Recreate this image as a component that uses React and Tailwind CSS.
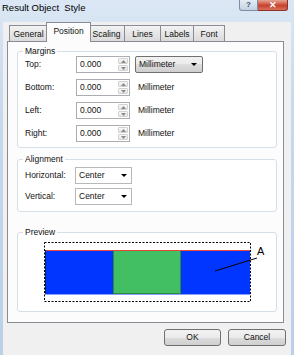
import React from "react";

const Tri = ({ up, w = 5, h = 3 }) => (
  <svg width={w} height={h} viewBox={`0 0 ${w} ${h}`}>
    <path d={up ? `M0 ${h} L${w / 2} 0 L${w} ${h} Z` : `M0 0 L${w} 0 L${w / 2} ${h} Z`} fill="currentColor" />
  </svg>
);

const SpinBox = ({ value }) => (
  <div className="flex h-[17px] w-[54px] border border-[#abadb3] bg-white">
    <div className="flex-1 pl-[3px] leading-[15px]">{value}</div>
    <div className="flex w-[12px] flex-col gap-px p-px">
      <div className="flex flex-1 items-center justify-center rounded-[1px] border border-[#d2d2d2] bg-[linear-gradient(#f8f8f8,#e6e6e6)] text-[#8a8a8a]">
        <Tri up />
      </div>
      <div className="flex flex-1 items-center justify-center rounded-[1px] border border-[#d2d2d2] bg-[linear-gradient(#f8f8f8,#e6e6e6)] text-[#8a8a8a]">
        <Tri />
      </div>
    </div>
  </div>
);

const Select = ({ value }) => (
  <div className="flex h-[17px] w-[57px] items-center border border-[#b8b8b8] bg-white pl-[3px] pr-[4px]">
    <span className="flex-1">{value}</span>
    <span className="text-black">
      <Tri w={6} h={3} />
    </span>
  </div>
);

const Group = ({ title, className, children }) => (
  <fieldset className={`ml-[9px] w-[260px] rounded-[3px] border border-[#d5dfe5] bg-white ${className}`}>
    <legend className="ml-[5px] px-[2px] leading-[9px]">{title}</legend>
    {children}
  </fieldset>
);

const tabs = [
  { label: "General", w: "w-[39px]" },
  { label: "Position", w: "w-[45px]", active: true },
  { label: "Scaling", w: "w-[37px]" },
  { label: "Lines", w: "w-[37px]" },
  { label: "Labels", w: "w-[34px]" },
  { label: "Font", w: "w-[32px]" },
];

const margins = ["Top:", "Bottom:", "Left:", "Right:"];

export default function App() {
  return (
    <div className="h-[355px] w-[294px] overflow-hidden bg-[linear-gradient(180deg,#dbe7f4_0%,#c6d9ed_30%,#b9d0e8_100%)] font-['Liberation_Sans',Arial,sans-serif] text-[8.5px] text-[#111]">
      {/* Title bar */}
      <div className="flex h-[18px] items-start">
        <div className="whitespace-pre pl-[2px] pt-[2px] text-[9.5px] leading-[12px] text-black">Result Object  Style</div>
        <div className="ml-auto mr-[6px] flex">
          <div className="flex h-[11px] w-[19px] items-center justify-center rounded-bl-[3px] border border-t-0 border-[#7d8ea4] bg-[linear-gradient(#e4ecf5,#c3d2e3)] text-[8px] font-bold leading-none text-[#3b4b60]">
            ?
          </div>
          <div className="flex h-[11px] w-[30px] items-center justify-center rounded-br-[3px] border border-l-0 border-t-0 border-[#8c3428] bg-[linear-gradient(#e8a493,#c8422f_55%,#d6705c)] text-[9px] font-bold leading-none text-white">
            ✕
          </div>
        </div>
      </div>

      {/* Client area */}
      <div className="mx-[3px] h-[333px] w-[288px] bg-[#f0f0f0]">
        {/* Tabs */}
        <div className="mt-[4px] flex h-[19px] items-end pl-[6px]">
          {tabs.map((t, i) =>
            t.active ? (
              <div
                key={t.label}
                className={`relative z-10 -mx-[2px] -mb-px flex h-[20px] ${t.w} items-start justify-center border border-b-0 border-[#898c95] bg-[#fcfcfc] pt-[3px] leading-[10px]`}
              >
                {t.label}
              </div>
            ) : (
              <div
                key={t.label}
                className={`flex h-[16px] ${t.w} ${i > 0 ? "-ml-px" : ""} items-center justify-center border border-b-0 border-[#898c95] bg-[linear-gradient(#f3f3f3,#e6e6e6_50%,#dadada)] leading-[10px]`}
              >
                {t.label}
              </div>
            )
          )}
        </div>

        {/* Tab page */}
        <div className="ml-[4px] h-[282px] w-[277px] border border-[#898c95] bg-[#fcfcfc]">
          <Group title="Margins" className="mt-[5px] pb-[5px]">
            <div className="flex flex-col gap-[6px]">
              {margins.map((m, i) => (
                <div key={m} className="flex h-[17px] items-center pl-[7px]">
                  <span className="w-[51px]">{m}</span>
                  <SpinBox value="0.000" />
                  {i === 0 ? (
                    <div className="ml-[5px] flex h-[17px] w-[68px] items-center rounded-[2px] border border-[#707070] bg-[linear-gradient(#f2f2f2,#ebebeb_50%,#dddddd_50%,#cfcfcf)] pl-[3px] pr-[5px]">
                      <span className="flex-1">Millimeter</span>
                      <span className="text-black">
                        <Tri w={6} h={3} />
                      </span>
                    </div>
                  ) : (
                    <span className="ml-[8px]">Millimeter</span>
                  )}
                </div>
              ))}
            </div>
          </Group>

          <Group title="Alignment" className="mt-[7px] pb-[6px]">
            <div className="mt-[3px] flex flex-col gap-[4px]">
              <div className="flex h-[17px] items-center pl-[7px]">
                <span className="w-[50px]">Horizontal:</span>
                <Select value="Center" />
              </div>
              <div className="flex h-[17px] items-center pl-[7px]">
                <span className="w-[50px]">Vertical:</span>
                <Select value="Center" />
              </div>
            </div>
          </Group>

          <Group title="Preview" className="mt-[16px] pb-[8px]">
            <div className="ml-[26px] mt-[5px]">
              <svg width="226" height="61" viewBox="0 0 226 61">
                <rect x="0.5" y="0.5" width="206" height="59" fill="none" stroke="#000" strokeDasharray="2 1.5" />
                <rect x="1" y="8" width="68" height="44" fill="#0036ff" />
                <rect x="69.5" y="8.5" width="67" height="43" fill="#42bf62" stroke="#2b8a3c" />
                <rect x="137" y="8" width="69" height="44" fill="#0036ff" />
                <line x1="1" y1="8.5" x2="206" y2="8.5" stroke="#e2473a" />
                <line x1="1.5" y1="8" x2="1.5" y2="52" stroke="#102070" />
                <line x1="1" y1="52.5" x2="206" y2="52.5" stroke="#8aa0ff" />
                <line x1="171" y1="29" x2="213" y2="16" stroke="#000" />
                <text x="213" y="13" fontSize="11" fontFamily="Liberation Sans, Arial, sans-serif" fill="#000">
                  A
                </text>
              </svg>
            </div>
          </Group>
        </div>

        {/* Buttons */}
        <div className="mt-[6px] flex justify-end gap-[7px] pr-[5px]">
          <button className="h-[17px] w-[57px] rounded-[3px] border border-[#707070] bg-[linear-gradient(#f2f2f2,#ebebeb_50%,#dddddd_50%,#cfcfcf)] leading-[15px]">
            OK
          </button>
          <button className="h-[17px] w-[58px] rounded-[3px] border border-[#707070] bg-[linear-gradient(#f2f2f2,#ebebeb_50%,#dddddd_50%,#cfcfcf)] leading-[15px]">
            Cancel
          </button>
        </div>
      </div>
    </div>
  );
}
